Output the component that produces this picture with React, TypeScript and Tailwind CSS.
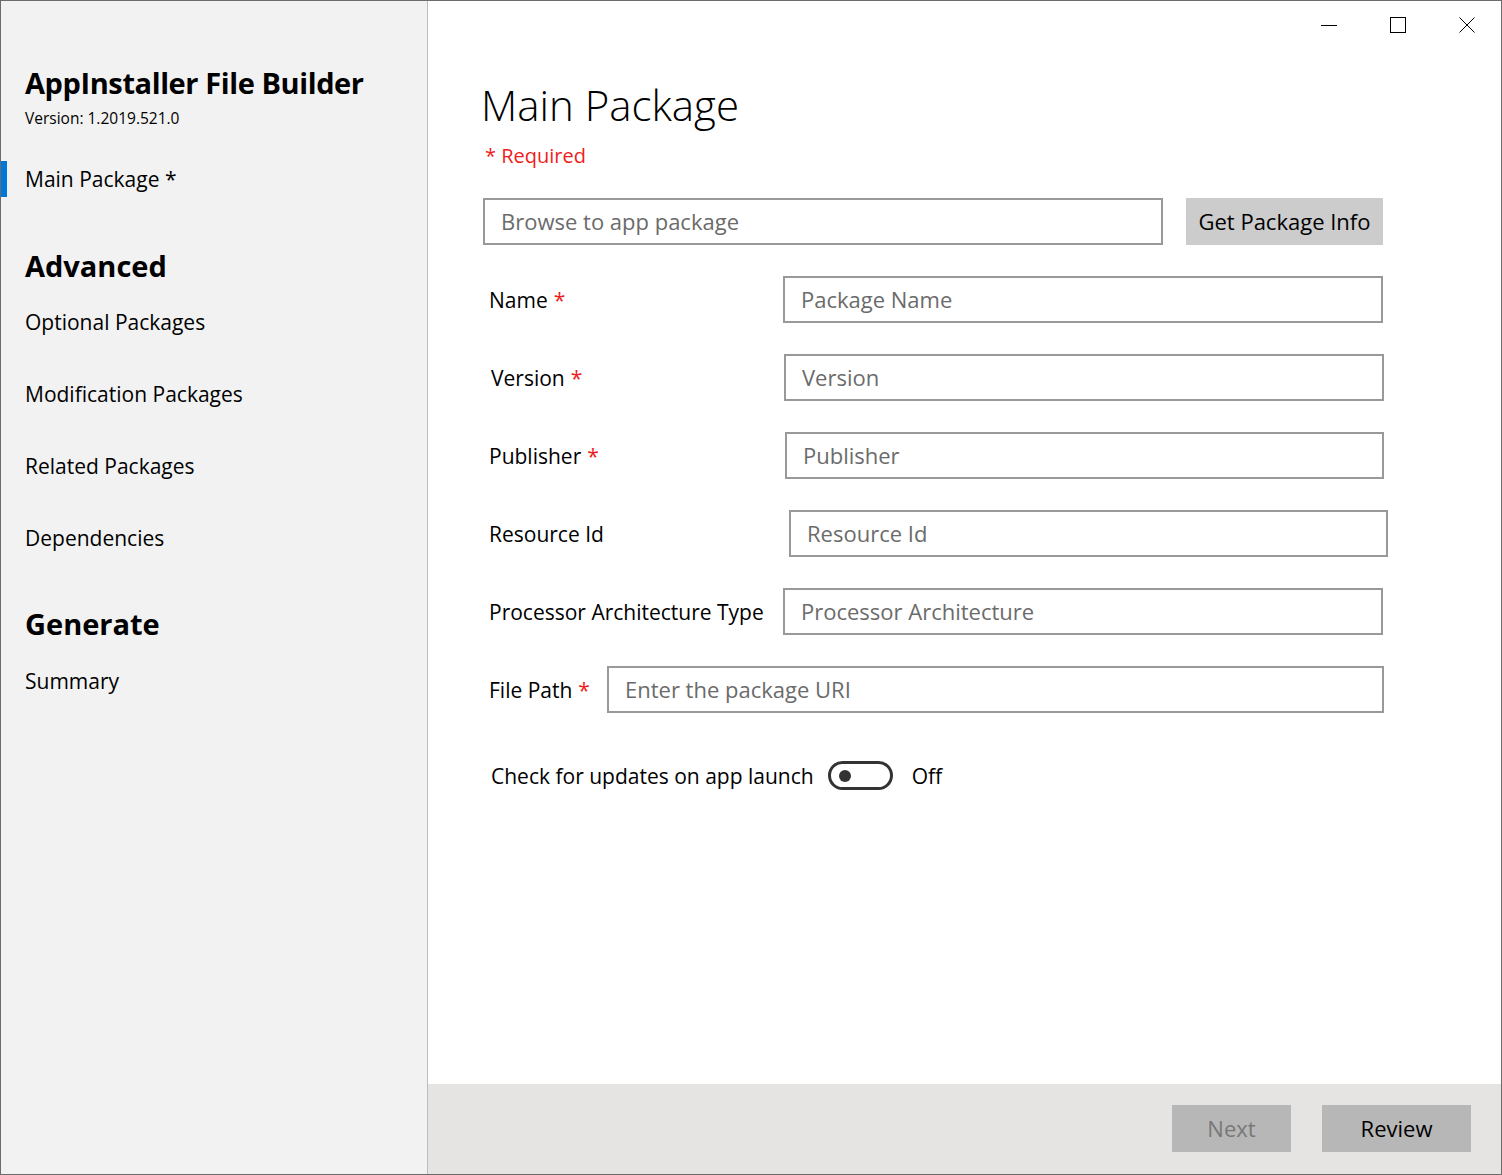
import React from 'react';

const font = { fontFamily: '"Open Sans", "Noto Sans", sans-serif' };

type Row = {
  label: string;
  required?: boolean;
  placeholder: string;
  // label column width and input width, measured from the screenshot
  labelClass: string;
  inputClass: string;
  rowClass: string;
};

const ROWS: Row[] = [
  { label: 'Name', required: true, placeholder: 'Package Name', rowClass: 'pl-[8px]', labelClass: 'w-[294px]', inputClass: 'w-[600px]' },
  { label: 'Version', required: true, placeholder: 'Version', rowClass: 'pl-[10px]', labelClass: 'w-[293px]', inputClass: 'w-[600px]' },
  { label: 'Publisher', required: true, placeholder: 'Publisher', rowClass: 'pl-[8px]', labelClass: 'w-[296px]', inputClass: 'w-[599px]' },
  { label: 'Resource Id', placeholder: 'Resource Id', rowClass: 'pl-[8px]', labelClass: 'w-[300px]', inputClass: 'w-[599px]' },
  { label: 'Processor Architecture Type', placeholder: 'Processor Architecture', rowClass: 'pl-[8px]', labelClass: 'w-[294px]', inputClass: 'w-[600px]' },
  { label: 'File Path', required: true, placeholder: 'Enter the package URI', rowClass: 'pl-[8px]', labelClass: 'w-[118px]', inputClass: 'w-[777px]' },
];

const NAV_ADVANCED = ['Optional Packages', 'Modification Packages', 'Related Packages', 'Dependencies'];

function TextBox({ placeholder, className }: { placeholder: string; className: string }) {
  return (
    <div className={`flex h-[47px] items-center border-2 border-[#999999] bg-white pl-[16px] text-[22px] text-[#6b6b6b] ${className}`}>
      {placeholder}
    </div>
  );
}

function Sidebar() {
  return (
    <aside className="flex w-[427px] shrink-0 flex-col border-r border-[#bdbdbd] bg-[#f2f2f2] text-black">
      <div className="mt-[62px] pl-[24px] text-[29px] font-bold leading-[40px] tracking-[-0.4px]">
        AppInstaller File Builder
      </div>
      <div className="mt-[3px] pl-[24px] text-[15.5px] leading-[24px]">Version: 1.2019.521.0</div>
      {/* selected item */}
      <div className="mt-[31px] flex h-[36px] items-center">
        <span className="h-full w-[6px] bg-[#0078d7]" />
        <span className="pl-[18px] pt-[2px] text-[21px]">Main Package *</span>
      </div>
      <div className="mt-[49px] pl-[24px] text-[29px] font-bold leading-[40px]">Advanced</div>
      <ul className="mt-[19px] flex flex-col gap-[36px]">
        {NAV_ADVANCED.map((item) => (
          <li key={item} className="flex h-[36px] items-center pl-[24px] text-[21px]">
            {item}
          </li>
        ))}
      </ul>
      <div className="mt-[47px] pl-[24px] text-[29px] font-bold leading-[40px]">Generate</div>
      <div className="mt-[20px] flex h-[36px] items-center pl-[24px] text-[21px]">Summary</div>
    </aside>
  );
}

function WindowControls() {
  return (
    <div className="flex h-[48px] justify-end">
      <button className="flex w-[69px] items-center justify-center">
        <svg width="16" height="16" viewBox="0 0 16 16">
          <path d="M0 8.5h16" stroke="#000" strokeWidth="1" />
        </svg>
      </button>
      <button className="flex w-[69px] items-center justify-center">
        <svg width="16" height="16" viewBox="0 0 16 16">
          <rect x="0.5" y="0.5" width="15" height="15" fill="none" stroke="#000" strokeWidth="1" />
        </svg>
      </button>
      <button className="flex w-[69px] items-center justify-center">
        <svg width="16" height="16" viewBox="0 0 16 16">
          <path d="M0.5 0.5l15 15M15.5 0.5l-15 15" stroke="#000" strokeWidth="1" />
        </svg>
      </button>
    </div>
  );
}

export default function App() {
  return (
    <div style={font} className="flex h-[1175px] w-[1502px] border border-[#6b6b6b] bg-white text-black">
      <Sidebar />
      <main className="flex flex-1 flex-col">
        <WindowControls />
        <div className="flex-1 pl-[53px]">
          <h1 className="mt-[28px] text-[42px] font-light leading-[56px]">Main Package</h1>
          <p className="mt-[8px] pl-[4px] text-[20px] leading-[30px] text-[#f01c1c]">* Required</p>

          <div className="mt-[27px] flex items-center pl-[2px]">
            <TextBox placeholder="Browse to app package" className="w-[680px]" />
            <button className="ml-[23px] flex h-[47px] w-[197px] items-center justify-center bg-[#cccccc] text-[22px]">
              Get Package Info
            </button>
          </div>

          <div className="mt-[31px] flex flex-col gap-[31px]">
            {ROWS.map((row) => (
              <div key={row.label} className={`flex items-center ${row.rowClass}`}>
                <div className={`shrink-0 pt-[3px] text-[21px] ${row.labelClass}`}>
                  {row.label}
                  {row.required && <span className="ml-[6px] text-[#f01c1c]">*</span>}
                </div>
                <TextBox placeholder={row.placeholder} className={row.inputClass} />
              </div>
            ))}
          </div>

          <div className="mt-[46px] flex items-center pl-[10px] text-[21px]">
            <span className="pt-[2px]">Check for updates on app launch</span>
            <span className="ml-[14px] flex h-[29px] w-[65px] items-center rounded-full border-[3px] border-[#333333] pl-[8px]">
              <span className="h-[12px] w-[12px] rounded-full bg-[#333333]" />
            </span>
            <span className="ml-[19px] pt-[2px]">Off</span>
          </div>
        </div>

        <footer className="flex h-[90px] items-start justify-end gap-[31px] bg-[#e5e4e3] pr-[30px] pt-[21px]">
          <button className="flex h-[47px] w-[119px] items-center justify-center bg-[#b8b7b7] text-[22px] text-[#777777]">
            Next
          </button>
          <button className="flex h-[47px] w-[149px] items-center justify-center bg-[#b8b7b7] text-[22px] text-black">
            Review
          </button>
        </footer>
      </main>
    </div>
  );
}
